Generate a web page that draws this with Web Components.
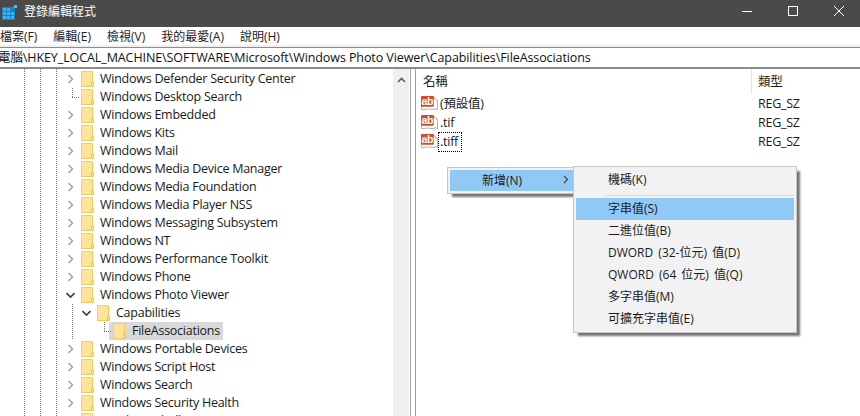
<!DOCTYPE html>
<html>
<head>
<meta charset="utf-8">
<title>登錄編輯程式</title>
<style>
  html, body { margin: 0; height: 100%; overflow: hidden; background: #fff; }
  body { font: 12px "Open Sans", "Noto Sans CJK TC", sans-serif; color: #000; }
</style>
</head>
<body>
<regedit-window>
  <title-bar slot="title">登錄編輯程式</title-bar>
  <menu-bar slot="menu"></menu-bar>
  <address-bar slot="address">電腦\HKEY_LOCAL_MACHINE\SOFTWARE\Microsoft\Windows Photo Viewer\Capabilities\FileAssociations</address-bar>
  <tree-pane slot="tree">
    <tree-row arrow="closed">Windows Defender Security Center</tree-row>
    <tree-row arrow="none">Windows Desktop Search</tree-row>
    <tree-row arrow="closed">Windows Embedded</tree-row>
    <tree-row arrow="closed">Windows Kits</tree-row>
    <tree-row arrow="closed">Windows Mail</tree-row>
    <tree-row arrow="closed">Windows Media Device Manager</tree-row>
    <tree-row arrow="closed">Windows Media Foundation</tree-row>
    <tree-row arrow="closed">Windows Media Player NSS</tree-row>
    <tree-row arrow="closed">Windows Messaging Subsystem</tree-row>
    <tree-row arrow="closed">Windows NT</tree-row>
    <tree-row arrow="closed">Windows Performance Toolkit</tree-row>
    <tree-row arrow="closed">Windows Phone</tree-row>
    <tree-row arrow="open">Windows Photo Viewer</tree-row>
    <tree-row arrow="open" level="1">Capabilities</tree-row>
    <tree-row arrow="none" level="2" selected>FileAssociations</tree-row>
    <tree-row arrow="closed">Windows Portable Devices</tree-row>
    <tree-row arrow="closed">Windows Script Host</tree-row>
    <tree-row arrow="closed">Windows Search</tree-row>
    <tree-row arrow="closed">Windows Security Health</tree-row>
    <tree-row arrow="closed">Windows Shell</tree-row>
  </tree-pane>
  <scroll-bar slot="scroll"></scroll-bar>
  <list-pane slot="list">
    <value-row type="REG_SZ">(預設值)</value-row>
    <value-row type="REG_SZ">.tif</value-row>
    <value-row type="REG_SZ" focused>.tiff</value-row>
  </list-pane>
  <context-menu slot="popup"></context-menu>
</regedit-window>

<script>
const FONT = '"Open Sans", "Noto Sans CJK TC", sans-serif';

class RegeditWindow extends HTMLElement {
  connectedCallback() {
    this.attachShadow({ mode: 'open' });
    this.shadowRoot.innerHTML = `
      <style>
        :host { display: flex; flex-direction: column; position: relative; width: 860px; height: 416px; overflow: hidden; background: #fff; }
        .body { display: flex; flex: 1; min-height: 0; }
        .split { width: 6px; box-sizing: border-box; flex: none; margin-left: 1px; border-left: 1px solid #a0a0a0; border-right: 1px solid #a0a0a0; }
      </style>
      <slot name="title"></slot>
      <slot name="menu"></slot>
      <slot name="address"></slot>
      <div class="body">
        <slot name="tree"></slot>
        <slot name="scroll"></slot>
        <div class="split"></div>
        <slot name="list"></slot>
      </div>
      <slot name="popup"></slot>
    `;
  }
}

class TitleBar extends HTMLElement {
  connectedCallback() {
    this.attachShadow({ mode: 'open' });
    this.shadowRoot.innerHTML = `
      <style>
        :host { display: flex; align-items: center; height: 27px; box-sizing: border-box; padding-bottom: 5px; background: #4a4a48; color: #fff; font: 12px ${FONT}; flex: none; overflow: hidden; }
        .logo { margin-left: 2px; margin-top: 3px; width: 15px; height: 15px; flex: none; }
        .name { margin-left: 7px; flex: 1; }
        .btns { display: flex; margin-right: -2px; }
        .btn { width: 46px; height: 22px; display: flex; align-items: center; justify-content: center; }
      </style>
      <svg class="logo" viewBox="0 0 15 15">
        <rect x="0" y="2" width="13" height="13" fill="#1a80c8"/>
        <g fill="#37b5ee">
          <rect x="1" y="3" width="3" height="3"/><rect x="5" y="3" width="3" height="3"/>
          <rect x="1" y="7" width="3" height="3"/><rect x="5" y="7" width="3" height="3"/><rect x="9" y="7" width="3" height="3"/>
          <rect x="1" y="11" width="3" height="3"/><rect x="5" y="11" width="3" height="3"/><rect x="9" y="11" width="3" height="3"/>
        </g>
        <rect x="12" y="0" width="3" height="3" fill="#45c0f2"/>
      </svg>
      <div class="name"><slot></slot></div>
      <div class="btns">
        <div class="btn"><svg width="10" height="10" viewBox="0 0 10 10"><path d="M0 5.5h10" stroke="#fff"/></svg></div>
        <div class="btn"><svg width="10" height="10" viewBox="0 0 10 10"><rect x=".5" y=".5" width="9" height="9" fill="none" stroke="#fff"/></svg></div>
        <div class="btn"><svg width="10" height="10" viewBox="0 0 10 10"><path d="M0 0l10 10M10 0L0 10" stroke="#fff"/></svg></div>
      </div>
    `;
  }
}

class MenuBar extends HTMLElement {
  connectedCallback() {
    this.attachShadow({ mode: 'open' });
    const items = ['檔案(F)', '編輯(E)', '檢視(V)', '我的最愛(A)', '說明(H)'];
    this.shadowRoot.innerHTML = `
      <style>
        :host { display: flex; align-items: center; height: 18px; padding-bottom: 2px; flex: none; font: 12px ${FONT}; color: #222; box-shadow: inset 0 -2px 0 #f0f0f0; }
        span { white-space: nowrap; }
        span:first-child { margin-left: 2px; }
        span + span { margin-left: 16px; }
      </style>
      ${items.map(i => `<span>${i}</span>`).join('')}
    `;
  }
}

class AddressBar extends HTMLElement {
  connectedCallback() {
    this.attachShadow({ mode: 'open' });
    this.shadowRoot.innerHTML = `
      <style>
        :host { display: block; height: 19px; flex: none; overflow: hidden; border-top: 1px solid #8c8c8c; border-bottom: 2px solid #8c8c8c; font: 12.5px/19px ${FONT}; letter-spacing: -.09px; color: #111; white-space: nowrap; }
        div { margin-left: -2px; }
      </style>
      <div><slot></slot></div>
    `;
  }
}

class TreePane extends HTMLElement {
  connectedCallback() {
    this.attachShadow({ mode: 'open' });
    const dots = x => `repeating-linear-gradient(to bottom, #777 0 1px, transparent 1px 2px) ${x}px 0 / 1px 100% no-repeat`;
    this.shadowRoot.innerHTML = `
      <style>
        :host { display: block; width: 393px; flex: none; overflow: hidden; padding-top: 1px; box-sizing: border-box; background: ${dots(24)}, ${dots(40)}, ${dots(56)}; position: relative; }
      </style>
      <slot></slot>
    `;
  }
}

class TreeRow extends HTMLElement {
  connectedCallback() {
    this.attachShadow({ mode: 'open' });
    const level = +(this.getAttribute('level') || 0);
    const arrow = this.getAttribute('arrow');
    const glyph = arrow === 'closed'
      ? '<path d="M2.5 1l4 4-4 4" fill="none" stroke="#a6a6a6" stroke-width="1.6"/>'
      : arrow === 'open'
        ? '<path d="M0.5 3l4 4 4-4" fill="none" stroke="#404040" stroke-width="1.6"/>'
        : '';
    this.shadowRoot.innerHTML = `
      <style>
        :host { display: flex; align-items: center; height: 18px; padding-left: ${66 + level * 16}px; font: 12.5px ${FONT}; letter-spacing: -.25px; color: #1a1a1a; white-space: nowrap; position: relative; }
        .arrow { width: 9px; height: 10px; flex: none; }
        .main { display: flex; align-items: center; height: 18px; margin-left: 2px; padding-left: 4px; padding-right: 3px; }
        :host([selected]) .main { background: #d9d9d9; }
        .folder { width: 13px; height: 16px; flex: none; }
        .label { margin-left: 6px; margin-bottom: 2px; }
        .stub { position: absolute; left: ${72 + level * 16}px; top: 9px; width: 8px; height: 1px; background: repeating-linear-gradient(to right, #777 0 1px, transparent 1px 2px); }
        .up { position: absolute; left: ${72 + level * 16}px; top: 0; width: 1px; height: 9px; background: repeating-linear-gradient(to bottom, #777 0 1px, transparent 1px 2px); }
        .trunk { position: absolute; left: 72px; top: 0; width: 1px; height: 18px; background: repeating-linear-gradient(to bottom, #777 0 1px, transparent 1px 2px); }
      </style>
      ${arrow === 'none' ? '<div class="stub"></div><div class="up"></div>' : ''}
      ${level > 0 ? '<div class="trunk"></div>' : ''}
      <svg class="arrow" viewBox="0 0 9 10">${glyph}</svg>
      <div class="main">
        <svg class="folder" viewBox="0 0 13 16">
          <path d="M.5.5h11v15H.5z" fill="#fde49a" stroke="#f0ca5d"/>
          <path d="M.5 15.5V.5h11" fill="none" stroke="#f2cf68"/>
          <path d="M10.5 11.5h2v4h-2z" fill="#fde49a" stroke="#eec457"/>
        </svg>
        <span class="label"><slot></slot></span>
      </div>
    `;
  }
}

class ScrollBar extends HTMLElement {
  connectedCallback() {
    this.attachShadow({ mode: 'open' });
    this.shadowRoot.innerHTML = `
      <style>
        :host { display: block; width: 16px; flex: none; background: #f0f0f0; padding-top: 8px; box-sizing: border-box; }
        svg { display: block; margin: 0 auto; width: 9px; height: 6px; }
      </style>
      <svg viewBox="0 0 9 6"><path d="M1 5l3.5-3.5L8 5" fill="none" stroke="#606060" stroke-width="1.7"/></svg>
    `;
  }
}

class ListPane extends HTMLElement {
  connectedCallback() {
    this.attachShadow({ mode: 'open' });
    this.shadowRoot.innerHTML = `
      <style>
        :host { display: block; flex: 1; min-width: 0; overflow: hidden; font: 12.5px ${FONT}; letter-spacing: -.25px; color: #1a1a1a; }
        .head { display: flex; height: 25px; }
        .name { width: 336px; padding-left: 7px; box-sizing: border-box; border-right: 1px solid #e5e5e5; line-height: 26px; }
        .type { padding-left: 6px; line-height: 26px; }
      </style>
      <div class="head"><div class="name">名稱</div><div class="type">類型</div></div>
      <div class="rows"><slot></slot></div>
    `;
  }
}

class ValueRow extends HTMLElement {
  connectedCallback() {
    this.attachShadow({ mode: 'open' });
    this.shadowRoot.innerHTML = `
      <style>
        :host { display: flex; align-items: center; height: 19px; padding-left: 5px; white-space: nowrap; }
        svg { width: 17px; height: 17px; flex: none; }
        .name { width: 320px; display: flex; align-items: center; box-sizing: border-box; }
        .txt { padding: 0 3px 0 1px; line-height: 18px; height: 18px; margin-left: 1px; }
        :host([focused]) .txt { outline: 1px dotted #000; }
      </style>
      <svg viewBox="0 0 16 16">
        <path d="M.5 1.5h11l4 4v8c-3-1.5-4 1-7 0s-5 1-8 0z" fill="#fff" stroke="#b8b8b8"/>
        <rect x="0" y="1" width="12" height="10" rx="1" fill="#d84a26"/>
        <text x="6" y="9" font-size="10" font-weight="700" text-anchor="middle" fill="#fff" font-family="Liberation Sans">ab</text>
      </svg>
      <div class="name"><span class="txt"><slot></slot></span></div>
      <div>${this.getAttribute('type')}</div>
    `;
  }
}

class ContextMenu extends HTMLElement {
  connectedCallback() {
    this.attachShadow({ mode: 'open' });
    const items = ['字串值(S)', '二進位值(B)', 'DWORD (32-位元) 值(D)', 'QWORD (64 位元) 值(Q)', '多字串值(M)', '可擴充字串值(E)'];
    this.shadowRoot.innerHTML = `
      <style>
        :host { display: block; position: absolute; left: 0; top: 0; width: 860px; height: 416px; pointer-events: none; font: 12px ${FONT}; word-spacing: 2px; color: #1a1a1a; }
        .box { position: absolute; background: #f2f2f2; border: 1px solid #c6c6c6; box-shadow: 4px 4px 2px -1px rgba(0,0,0,.55); box-sizing: border-box; }
        .parent { left: 447px; top: 167px; width: 130px; height: 27px; padding: 2px 0 2px 2px; }
        .parent .on { display: flex; align-items: center; height: 21px; padding-bottom: 2px; box-sizing: border-box; background: #90c8f6; padding-left: 32px; }
        .parent .gt { margin-left: auto; margin-right: 7px; width: 6px; height: 9px; }
        .sub { left: 573px; top: 166px; width: 224px; height: 167px; padding: 2px; }
        .item { height: 22px; line-height: 22px; padding-left: 32px; white-space: nowrap; }
        .sep { height: 1px; margin: 3px 0 2px 30px; background: #d7d7d7; }
        .sel { background: #90c8f6; }
      </style>
      <div class="box parent"><div class="on">新增(N)<svg class="gt" viewBox="0 0 6 9"><path d="M1 1l3.5 3.5L1 8" fill="none" stroke="#444" stroke-width="1.2"/></svg></div></div>
      <div class="box sub">
        <div class="item" style="height:23px;line-height:22px">機碼(K)</div>
        <div class="sep"></div>
        ${items.map((t, i) => `<div class="item${i === 0 ? ' sel' : ''}">${t}</div>`).join('')}
      </div>
    `;
  }
}

customElements.define('regedit-window', RegeditWindow);
customElements.define('title-bar', TitleBar);
customElements.define('menu-bar', MenuBar);
customElements.define('address-bar', AddressBar);
customElements.define('tree-pane', TreePane);
customElements.define('tree-row', TreeRow);
customElements.define('scroll-bar', ScrollBar);
customElements.define('list-pane', ListPane);
customElements.define('value-row', ValueRow);
customElements.define('context-menu', ContextMenu);
</script>
</body>
</html>
